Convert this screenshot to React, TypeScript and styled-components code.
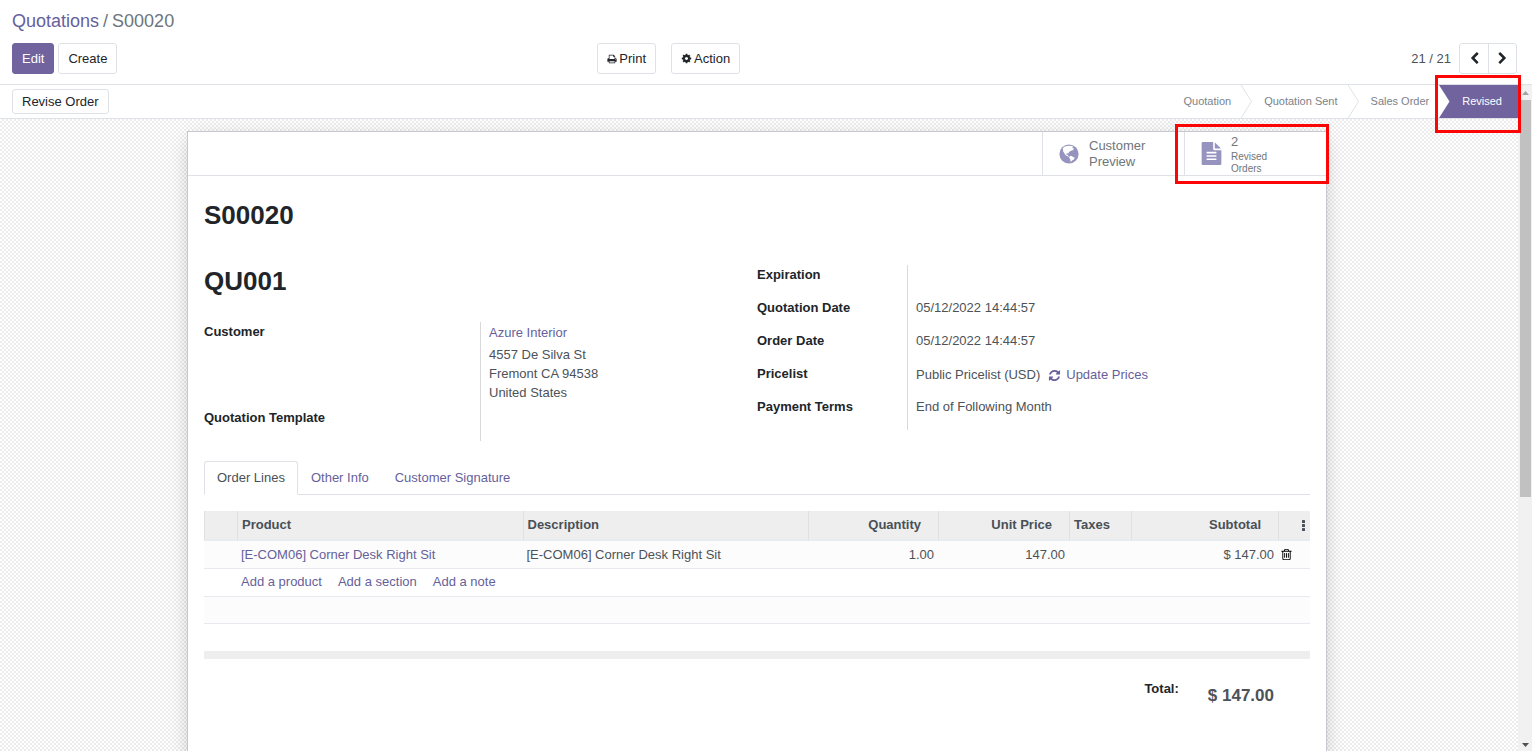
import React from "react";
import styled, { createGlobalStyle } from "styled-components";

const GlobalStyle = createGlobalStyle`
  *, *::before, *::after { box-sizing: border-box; }
  body {
    margin: 0;
    background: #fff;
    color: #4c5258;
    font: 13px/20px "Liberation Sans", Arial, sans-serif;
  }
  button { font: inherit; color: inherit; cursor: pointer; }
  a { color: #665f9b; text-decoration: none; }
  svg { flex: none; }
`;

const Shell = styled.div`
  display: flex;
  flex-direction: column;
  height: 100vh;
  overflow: hidden;
`;

const ControlPanel = styled.header`
  flex: none;
  padding: 10px 15px 10px 12px;
  border-bottom: 1px solid #dee2e6;
`;

const Breadcrumb = styled.nav`
  display: flex;
  gap: 4px;
  font-size: 18px;
  line-height: 22px;
  color: #6c757d;
`;

const PanelRow = styled.div`
  display: grid;
  grid-template-columns: 7fr 11fr;
  margin-top: 11px;
`;

const ButtonGroup = styled.div<{ $gap: number }>`
  display: flex;
  align-items: center;
  gap: ${(p) => p.$gap}px;
`;

const PanelRight = styled.div`
  display: flex;
  justify-content: space-between;
`;

const Button = styled.button<{ $primary?: boolean; $small?: boolean }>`
  display: inline-flex;
  align-items: center;
  gap: 2px;
  height: ${(p) => (p.$small ? 25 : 31)}px;
  padding: 0 9px;
  border: 1px solid ${(p) => (p.$primary ? "#71639e" : "#dee2e6")};
  border-radius: 3px;
  background: ${(p) => (p.$primary ? "#71639e" : "#fff")};
  color: ${(p) => (p.$primary ? "#fff" : "#212529")};
`;

const Pager = styled.div`
  display: flex;
  align-items: center;
  gap: 8px;
`;

const PagerButtons = styled.div`
  display: flex;
  border: 1px solid #dee2e6;
  border-radius: 3px;
`;

const PagerButton = styled.button`
  display: flex;
  align-items: center;
  justify-content: center;
  width: 28px;
  height: 29px;
  padding: 0;
  border: 0;
  background: none;
  color: #212529;
  & + & {
    border-left: 1px solid #dee2e6;
  }
`;

const Body = styled.div`
  flex: 1;
  display: flex;
  min-height: 0;
`;

const Content = styled.main`
  flex: 1;
  min-width: 0;
  display: flex;
  flex-direction: column;
`;

const StatusBar = styled.div`
  flex: none;
  display: flex;
  justify-content: space-between;
  align-items: center;
  height: 34px;
  padding-left: 12px;
  border-bottom: 1px solid #dee2e6;
  background: #fff;
`;

const Stages = styled.div`
  display: flex;
  align-self: stretch;
`;

const Stage = styled.button<{ $active?: boolean }>`
  position: relative;
  padding: 0 ${(p) => (p.$active ? 16 : 10)}px 1px 23px;
  border: 0;
  background: ${(p) => (p.$active ? "#71639e" : "#fff")};
  color: ${(p) => (p.$active ? "#fff" : "#7c828a")};
  font-size: 11px;
`;

const StageEdge = styled.svg`
  position: absolute;
  top: 0;
  left: 0;
  width: 11px;
  height: 100%;
`;

const Highlight = styled.span<{ $inset: string }>`
  position: absolute;
  inset: ${(p) => p.$inset};
  z-index: 2;
  border: 3px solid #fb0505;
  pointer-events: none;
`;

const Backdrop = styled.div`
  flex: 1;
  min-height: 0;
  display: flex;
  justify-content: center;
  padding: 12px 4px 0 0;
  background: repeating-conic-gradient(#ececec 0 25%, #fff 0 50%) 0 0 / 4px 4px;
`;

const Sheet = styled.section`
  flex: 0 1 1140px;
  align-self: flex-start;
  min-height: 100%;
  padding-bottom: 60px;
  border: 1px solid #c8c8d3;
  background: #fff;
  box-shadow: 0 5px 20px -5px rgba(0, 0, 0, 0.27);
`;

const StatBox = styled.div`
  display: flex;
  justify-content: flex-end;
  height: 44px;
  border-bottom: 1px solid #dee2e6;
`;

const StatButton = styled.button`
  position: relative;
  display: flex;
  align-items: center;
  gap: 10px;
  width: 142px;
  padding: 0 0 0 16px;
  border: 0;
  border-left: 1px solid #dee2e6;
  background: none;
  color: #70757b;
  text-align: left;
`;

const StatIcon = styled.span`
  display: flex;
  justify-content: center;
  width: 20px;
  color: #9693be;
`;

const StatLabel = styled.span`
  width: 60px;
  padding-top: 1px;
  line-height: 16px;
`;

const StatCaption = styled.span`
  display: block;
  padding-top: 1px;
  font-size: 10px;
  line-height: 12px;
`;

const SheetBody = styled.div`
  padding: 23px 16px 0;
`;

const Title = styled.h1`
  margin: 0;
  color: #212529;
  font-size: 26px;
  line-height: 32px;
`;

const Groups = styled.div`
  display: grid;
  grid-template-columns: 1fr 1fr;
  margin-top: 34px;
`;

const Fields = styled.dl<{ $label: number; $rows: string; $top: number }>`
  display: grid;
  grid-template-columns: ${(p) => p.$label}px 1fr;
  grid-template-rows: ${(p) => p.$rows};
  margin: ${(p) => p.$top}px 0 0;
`;

const Label = styled.dt`
  color: #212529;
  font-weight: bold;
`;

const Value = styled.dd<{ $lowered?: boolean }>`
  margin: 0;
  padding: ${(p) => (p.$lowered ? 1 : 0)}px 0 0 8px;
  border-left: 1px solid #d9d9dc;
`;

const Address = styled.address`
  margin-top: 2px;
  font-style: normal;
  line-height: 19px;
`;

const PricelistValue = styled.div`
  display: flex;
  gap: 8px;
`;

const UpdateLink = styled.a`
  display: flex;
  align-items: center;
  gap: 5px;
`;

const Tabs = styled.div`
  display: flex;
  margin-top: 20px;
  border-bottom: 1px solid #dee2e6;
`;

const Tab = styled.button<{ $active?: boolean }>`
  height: 34px;
  margin-bottom: -1px;
  padding: 0 12px;
  border: 1px solid ${(p) => (p.$active ? "#dee2e6" : "transparent")};
  border-bottom-color: ${(p) => (p.$active ? "#fff" : "transparent")};
  border-radius: 3px 3px 0 0;
  background: ${(p) => (p.$active ? "#fff" : "none")};
  color: ${(p) => (p.$active ? "#495057" : "#665f9b")};
`;

const Lines = styled.table`
  width: 100%;
  margin-top: 16px;
  table-layout: fixed;
  border-collapse: separate;
  border-spacing: 0;
`;

const Th = styled.th<{ $right?: boolean }>`
  height: 30px;
  padding: 0 ${(p) => (p.$right ? 17 : 4)}px 0 4px;
  border-left: 1px solid #dfe0e2;
  border-bottom: 2px solid #e9ecef;
  background: #eee;
  color: #495057;
  text-align: ${(p) => (p.$right ? "right" : "left")};
`;

const HeadButton = styled.button`
  display: flex;
  margin-left: auto;
  padding: 0;
  border: 0;
  background: none;
`;

const Row = styled.tr<{ $striped?: boolean; $last?: boolean }>`
  background: ${(p) => (p.$striped ? "#fcfcfc" : "#fff")};
  td {
    border-bottom: ${(p) => (p.$last ? 0 : 1)}px solid #e6e9ed;
  }
`;

const Td = styled.td<{ $right?: boolean }>`
  height: 28px;
  padding: 0 4px;
  text-align: ${(p) => (p.$right ? "right" : "left")};
`;

const SpacerTd = styled.td`
  height: 27px;
  padding: 0;
`;

const AddLinks = styled.div`
  display: flex;
  gap: 16px;
  height: 22px;
`;

const IconButton = styled.button`
  display: flex;
  padding: 0 0 0 2px;
  border: 0;
  background: none;
  color: #000;
`;

const FootTd = styled.td`
  height: 8px;
  padding: 0;
  background: #eee;
`;

const Totals = styled.dl`
  display: flex;
  justify-content: flex-end;
  gap: 29px;
  margin: 20px 36px 0 0;
  font-weight: bold;
`;

const TotalValue = styled.dd`
  margin: 7px 0 0;
  font-size: 17px;
`;

const ScrollTrack = styled.div`
  flex: none;
  display: flex;
  flex-direction: column;
  align-items: center;
  width: 14px;
  padding: 6px 0 4px 1px;
  background: #f1f1f1;
`;

const ScrollThumb = styled.div`
  flex: 0 1 397px;
  width: 11px;
  margin: 5px 0 auto;
  background: #c1c1c1;
`;

const paths = {
  print:
    "M448 1536h896v-256h-896v256zm0-640h896v-384h-160q-40 0-68-28t-28-68v-160h-640v640zm1152 64q0-26-19-45t-45-19-45 19-19 45 19 45 45 19 45-19 19-45zm128 0v416q0 13-9.5 22.5t-22.5 9.5h-224v160q0 40-28 68t-68 28h-960q-40 0-68-28t-28-68v-160h-224q-13 0-22.5-9.5t-9.5-22.5v-416q0-79 56.5-135.5t135.5-56.5h64v-544q0-40 28-68t68-28h672q40 0 88 20t76 48l152 152q28 28 48 76t20 88v256h64q79 0 135.5 56.5t56.5 135.5z",
  cog: "M1152 896q0-106-75-181t-181-75-181 75-75 181 75 181 181 75 181-75 75-181zm512-109v222q0 12-8 23t-20 13l-185 28q-19 54-39 91 35 50 107 138 10 12 10 25t-9 23q-27 37-99 108t-94 71q-12 0-26-9l-138-108q-44 23-91 38-16 136-29 186-7 28-36 28h-222q-14 0-24.5-8.5t-11.5-21.5l-28-184q-49-16-90-37l-141 107q-10 9-25 9-14 0-25-11-126-114-165-168-7-10-7-23 0-12 8-23 15-21 51-66.5t54-70.5q-27-50-41-99l-183-27q-13-2-21-12.5t-8-23.5v-222q0-12 8-23t19-13l186-28q14-46 39-92-40-57-107-138-10-12-10-24 0-10 9-23 26-36 98.5-107.5t94.5-71.5q13 0 26 10l138 107q44-23 91-38 16-136 29-186 7-28 36-28h222q14 0 24.5 8.5t11.5 21.5l28 184q49 16 90 37l142-107q9-9 24-9 13 0 25 10 129 119 165 170 7 8 7 22 0 12-8 23-15 21-51 66.5t-54 70.5q26 50 41 98l183 28q13 2 21 12.5t8 23.5z",
  left: "M1427 301l-531 531 531 531q19 19 19 45t-19 45l-166 166q-19 19-45 19t-45-19l-742-742q-19-19-19-45t19-45l742-742q19-19 45-19t45 19l166 166q19 19 19 45t-19 45z",
  right:
    "M1363 877l-742 742q-19 19-45 19t-45-19l-166-166q-19-19-19-45t19-45l531-531-531-531q-19-19-19-45t19-45l166-166q19-19 45-19t45 19l742 742q19 19 19 45t-19 45z",
  refresh:
    "M1639 1056q0 5-1 7-64 268-268 434.5t-478 166.5q-146 0-282.5-55t-243.5-157l-129 129q-19 19-45 19t-45-19-19-45v-448q0-26 19-45t45-19h448q26 0 45 19t19 45-19 45l-137 137q71 66 161 102t187 36q134 0 250-65t186-179q11-17 53-117 8-23 30-23h192q13 0 22.5 9.5t9.5 22.5zm25-800v448q0 26-19 45t-45 19h-448q-26 0-45-19t-19-45 19-45l138-138q-148-137-349-137-134 0-250 65t-186 179q-11 17-53 117-8 23-30 23h-199q-13 0-22.5-9.5t-9.5-22.5v-7q65-268 270-434.5t480-166.5q146 0 284 55.5t245 156.5l130-129q19-19 45-19t45 19 19 45z",
  trash:
    "M704 736v576q0 14-9 23t-23 9h-64q-14 0-23-9t-9-23v-576q0-14 9-23t23-9h64q14 0 23 9t9 23zm256 0v576q0 14-9 23t-23 9h-64q-14 0-23-9t-9-23v-576q0-14 9-23t23-9h64q14 0 23 9t9 23zm256 0v576q0 14-9 23t-23 9h-64q-14 0-23-9t-9-23v-576q0-14 9-23t23-9h64q14 0 23 9t9 23zm128 724v-948h-896v948q0 22 7 40.5t14.5 27 10.5 8.5h832q3 0 10.5-8.5t14.5-27 7-40.5zm-672-1076h448l-48-117q-7-9-17-11h-317q-10 2-17 11zm928 32v64q0 14-9 23t-23 9h-96v948q0 83-47 143.5t-113 60.5h-832q-66 0-113-58.5t-47-141.5v-952h-96q-14 0-23-9t-9-23v-64q0-14 9-23t23-9h309l70-167q15-37 54-63t79-26h320q40 0 79 26t54 63l70 167h309q14 0 23 9t9 23z",
  file: "M1596 476q14 14 28 36h-472v-472q22 14 36 28zm-476 164h544v1056q0 40-28 68t-68 28h-1344q-40 0-68-28t-28-68v-1600q0-40 28-68t68-28h800v544q0 40 28 68t68 28zm160 736v-64q0-14-9-23t-23-9h-704q-14 0-23 9t-9 23v64q0 14 9 23t23 9h704q14 0 23-9t9-23zm0-256v-64q0-14-9-23t-23-9h-704q-14 0-23 9t-9 23v64q0 14 9 23t23 9h704q14 0 23-9t9-23zm0-256v-64q0-14-9-23t-23-9h-704q-14 0-23 9t-9 23v64q0 14 9 23t23 9h704q14 0 23-9t9-23z",
};

function Icon({ name, size }: { name: keyof typeof paths; size: number }) {
  return (
    <svg width={size} height={size} viewBox="0 0 1792 1792" fill="currentColor" aria-hidden="true">
      <path d={paths[name]} />
    </svg>
  );
}

function GlobeIcon() {
  return (
    <svg width="20" height="20" viewBox="0 0 20 20" aria-hidden="true">
      <circle cx="10" cy="10" r="9.6" fill="currentColor" />
      <path
        fill="#fff"
        d="M3.6 4.4 5.4 2.8 7.6 2 10 1.7 13.2 2.1 14.4 3 13 3.4 14.8 4.6 14.2 6.2 12.6 6.4 10.8 7.6 9.6 8.6 9.4 9.8 8.4 9.2 7.2 9.8 7.8 11 8.8 10.8 9.4 12 10.4 12.4 9.8 12.8 8 12 6.4 11 5.2 9 4.2 7.6 4 5.8Z"
      />
      <path
        fill="#fff"
        d="M10.4 12.4 12 11.8 13.8 12.8 15.6 13.6 15 15.4 13.4 16.2 12.2 17.6 11.4 17.4 11.4 15.4 10.2 14Z"
      />
    </svg>
  );
}

function KebabIcon() {
  return (
    <svg width="5" height="11" viewBox="0 0 5 11" fill="#495057" aria-hidden="true">
      <rect x="1" y="0" width="3" height="3" rx="0.6" />
      <rect x="1" y="4" width="3" height="3" rx="0.6" />
      <rect x="1" y="8" width="3" height="3" rx="0.6" />
    </svg>
  );
}

const stages = ["Quotation", "Quotation Sent", "Sales Order", "Revised"];

function StageItem({ label, index }: { label: string; index: number }) {
  const active = label === "Revised";
  return (
    <Stage $active={active} aria-current={active ? "step" : undefined}>
      {index > 0 && (
        <StageEdge viewBox="0 0 11 33" preserveAspectRatio="none" aria-hidden="true">
          <path
            d="M0 0 10.5 16.5 0 33"
            fill="#fff"
            stroke={active ? "none" : "#dee2e6"}
          />
        </StageEdge>
      )}
      {label}
      {active && <Highlight $inset="-10px -3px -15px -4px" />}
    </Stage>
  );
}

const terms: [string, React.ReactNode][] = [
  ["Expiration", ""],
  ["Quotation Date", "05/12/2022 14:44:57"],
  ["Order Date", "05/12/2022 14:44:57"],
  [
    "Pricelist",
    <PricelistValue>
      Public Pricelist (USD)
      <UpdateLink href="#update">
        <Icon name="refresh" size={13} />
        Update Prices
      </UpdateLink>
    </PricelistValue>,
  ],
  ["Payment Terms", "End of Following Month"],
];

export default function App() {
  return (
    <Shell>
      <GlobalStyle />
      <ControlPanel>
        <Breadcrumb aria-label="Breadcrumb">
          <a href="#quotations">Quotations</a>
          <span>/</span>
          <span>S00020</span>
        </Breadcrumb>
        <PanelRow>
          <ButtonGroup $gap={4}>
            <Button $primary>Edit</Button>
            <Button>Create</Button>
          </ButtonGroup>
          <PanelRight>
            <ButtonGroup $gap={15}>
              <Button>
                <Icon name="print" size={10} />
                Print
              </Button>
              <Button>
                <Icon name="cog" size={11} />
                Action
              </Button>
            </ButtonGroup>
            <Pager>
              <span>21 / 21</span>
              <PagerButtons>
                <PagerButton aria-label="Previous">
                  <Icon name="left" size={13} />
                </PagerButton>
                <PagerButton aria-label="Next">
                  <Icon name="right" size={13} />
                </PagerButton>
              </PagerButtons>
            </Pager>
          </PanelRight>
        </PanelRow>
      </ControlPanel>

      <Body>
        <Content>
          <StatusBar>
            <Button $small>Revise Order</Button>
            <Stages>
              {stages.map((s, i) => (
                <StageItem key={s} label={s} index={i} />
              ))}
            </Stages>
          </StatusBar>

          <Backdrop>
            <Sheet>
              <StatBox>
                <StatButton>
                  <StatIcon>
                    <GlobeIcon />
                  </StatIcon>
                  <StatLabel>Customer Preview</StatLabel>
                </StatButton>
                <StatButton>
                  <StatIcon>
                    <Icon name="file" size={23} />
                  </StatIcon>
                  <StatLabel>
                    2<StatCaption>Revised Orders</StatCaption>
                  </StatLabel>
                  <Highlight $inset="-8px -3px -9px -10px" />
                </StatButton>
              </StatBox>

              <SheetBody>
                <Title>S00020</Title>
                <Groups>
                  <div>
                    <Title as="h2">QU001</Title>
                    <Fields $label={276} $rows="86px 33px" $top={25}>
                      <Label>Customer</Label>
                      <Value $lowered>
                        <a href="#customer">Azure Interior</a>
                        <Address>
                          4557 De Silva St
                          <br />
                          Fremont CA 94538
                          <br />
                          United States
                        </Address>
                      </Value>
                      <Label>Quotation Template</Label>
                      <Value />
                    </Fields>
                  </div>
                  <Fields $label={150} $rows="repeat(5, 33px)" $top={0}>
                    {terms.map(([label, value]) => (
                      <React.Fragment key={label}>
                        <Label>{label}</Label>
                        <Value $lowered={label === "Pricelist"}>{value}</Value>
                      </React.Fragment>
                    ))}
                  </Fields>
                </Groups>

                <Tabs role="tablist">
                  <Tab role="tab" aria-selected="true" $active>
                    Order Lines
                  </Tab>
                  <Tab role="tab" aria-selected="false">
                    Other Info
                  </Tab>
                  <Tab role="tab" aria-selected="false">
                    Customer Signature
                  </Tab>
                </Tabs>

                <Lines>
                  <colgroup>
                    <col width="33" />
                    <col />
                    <col />
                    <col width="130" />
                    <col width="131" />
                    <col width="62" />
                    <col width="147" />
                    <col width="32" />
                  </colgroup>
                  <thead>
                    <tr>
                      <Th />
                      <Th>Product</Th>
                      <Th>Description</Th>
                      <Th $right>Quantity</Th>
                      <Th $right>Unit Price</Th>
                      <Th>Taxes</Th>
                      <Th $right>Subtotal</Th>
                      <Th>
                        <HeadButton aria-label="Optional columns">
                          <KebabIcon />
                        </HeadButton>
                      </Th>
                    </tr>
                  </thead>
                  <tbody>
                    <Row $striped>
                      <Td />
                      <Td>
                        <a href="#product">[E-COM06] Corner Desk Right Sit</a>
                      </Td>
                      <Td>[E-COM06] Corner Desk Right Sit</Td>
                      <Td $right>1.00</Td>
                      <Td $right>147.00</Td>
                      <Td />
                      <Td $right>$ 147.00</Td>
                      <SpacerTd>
                        <IconButton aria-label="Delete row">
                          <Icon name="trash" size={13} />
                        </IconButton>
                      </SpacerTd>
                    </Row>
                    <Row>
                      <Td />
                      <Td colSpan={7}>
                        <AddLinks>
                          <a href="#add-product">Add a product</a>
                          <a href="#add-section">Add a section</a>
                          <a href="#add-note">Add a note</a>
                        </AddLinks>
                      </Td>
                    </Row>
                    <Row $striped>
                      <SpacerTd colSpan={8} />
                    </Row>
                    <Row $last>
                      <SpacerTd colSpan={8} />
                    </Row>
                  </tbody>
                  <tfoot>
                    <tr>
                      <FootTd colSpan={8} />
                    </tr>
                  </tfoot>
                </Lines>

                <Totals>
                  <Label>Total:</Label>
                  <TotalValue>$ 147.00</TotalValue>
                </Totals>
              </SheetBody>
            </Sheet>
          </Backdrop>
        </Content>

        <ScrollTrack aria-hidden="true">
          <svg width="7" height="4" viewBox="0 0 7 4">
            <path d="M0 4 3.5 0 7 4z" fill="#a3a3a3" />
          </svg>
          <ScrollThumb />
          <svg width="7" height="4" viewBox="0 0 7 4">
            <path d="M0 0 3.5 4 7 0z" fill="#505050" />
          </svg>
        </ScrollTrack>
      </Body>
    </Shell>
  );
}
